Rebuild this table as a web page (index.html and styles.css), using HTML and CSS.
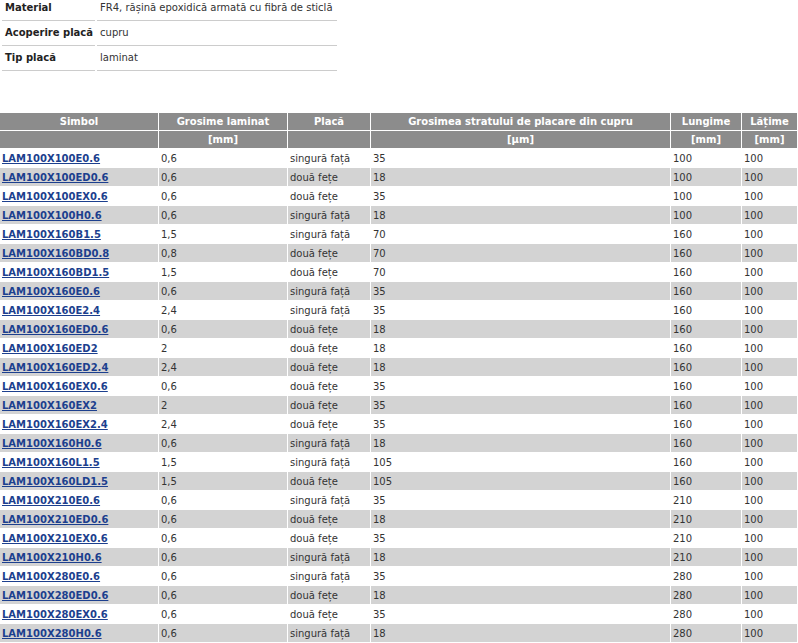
FILE: index.html
```html
<!DOCTYPE html>
<html lang="ro">
<head>
<meta charset="utf-8">
<title>Laminat</title>
<link rel="stylesheet" href="styles.css">
</head>
<body>
<table class="props">
  <tr><th>Material</th><td>FR4, rășină epoxidică armată cu fibră de sticlă</td></tr>
  <tr><th>Acoperire placă</th><td>cupru</td></tr>
  <tr><th>Tip placă</th><td>laminat</td></tr>
</table>

<table class="list">
  <colgroup>
    <col class="c-sym"><col class="c-gro"><col class="c-pla"><col class="c-str"><col class="c-len"><col class="c-lat">
  </colgroup>
  <thead>
    <tr><th>Simbol</th><th>Grosime laminat</th><th>Placă</th><th>Grosimea stratului de placare din cupru</th><th>Lungime</th><th>Lățime</th></tr>
    <tr><th></th><th>[mm]</th><th></th><th>[µm]</th><th>[mm]</th><th>[mm]</th></tr>
  </thead>
  <tbody>
    <tr><td><a href="#">LAM100X100E0.6</a></td><td>0,6</td><td>singură față</td><td>35</td><td>100</td><td>100</td></tr>
    <tr><td><a href="#">LAM100X100ED0.6</a></td><td>0,6</td><td>două fețe</td><td>18</td><td>100</td><td>100</td></tr>
    <tr><td><a href="#">LAM100X100EX0.6</a></td><td>0,6</td><td>două fețe</td><td>35</td><td>100</td><td>100</td></tr>
    <tr><td><a href="#">LAM100X100H0.6</a></td><td>0,6</td><td>singură față</td><td>18</td><td>100</td><td>100</td></tr>
    <tr><td><a href="#">LAM100X160B1.5</a></td><td>1,5</td><td>singură față</td><td>70</td><td>160</td><td>100</td></tr>
    <tr><td><a href="#">LAM100X160BD0.8</a></td><td>0,8</td><td>două fețe</td><td>70</td><td>160</td><td>100</td></tr>
    <tr><td><a href="#">LAM100X160BD1.5</a></td><td>1,5</td><td>două fețe</td><td>70</td><td>160</td><td>100</td></tr>
    <tr><td><a href="#">LAM100X160E0.6</a></td><td>0,6</td><td>singură față</td><td>35</td><td>160</td><td>100</td></tr>
    <tr><td><a href="#">LAM100X160E2.4</a></td><td>2,4</td><td>singură față</td><td>35</td><td>160</td><td>100</td></tr>
    <tr><td><a href="#">LAM100X160ED0.6</a></td><td>0,6</td><td>două fețe</td><td>18</td><td>160</td><td>100</td></tr>
    <tr><td><a href="#">LAM100X160ED2</a></td><td>2</td><td>două fețe</td><td>18</td><td>160</td><td>100</td></tr>
    <tr><td><a href="#">LAM100X160ED2.4</a></td><td>2,4</td><td>două fețe</td><td>18</td><td>160</td><td>100</td></tr>
    <tr><td><a href="#">LAM100X160EX0.6</a></td><td>0,6</td><td>două fețe</td><td>35</td><td>160</td><td>100</td></tr>
    <tr><td><a href="#">LAM100X160EX2</a></td><td>2</td><td>două fețe</td><td>35</td><td>160</td><td>100</td></tr>
    <tr><td><a href="#">LAM100X160EX2.4</a></td><td>2,4</td><td>două fețe</td><td>35</td><td>160</td><td>100</td></tr>
    <tr><td><a href="#">LAM100X160H0.6</a></td><td>0,6</td><td>singură față</td><td>18</td><td>160</td><td>100</td></tr>
    <tr><td><a href="#">LAM100X160L1.5</a></td><td>1,5</td><td>singură față</td><td>105</td><td>160</td><td>100</td></tr>
    <tr><td><a href="#">LAM100X160LD1.5</a></td><td>1,5</td><td>două fețe</td><td>105</td><td>160</td><td>100</td></tr>
    <tr><td><a href="#">LAM100X210E0.6</a></td><td>0,6</td><td>singură față</td><td>35</td><td>210</td><td>100</td></tr>
    <tr><td><a href="#">LAM100X210ED0.6</a></td><td>0,6</td><td>două fețe</td><td>18</td><td>210</td><td>100</td></tr>
    <tr><td><a href="#">LAM100X210EX0.6</a></td><td>0,6</td><td>două fețe</td><td>35</td><td>210</td><td>100</td></tr>
    <tr><td><a href="#">LAM100X210H0.6</a></td><td>0,6</td><td>singură față</td><td>18</td><td>210</td><td>100</td></tr>
    <tr><td><a href="#">LAM100X280E0.6</a></td><td>0,6</td><td>singură față</td><td>35</td><td>280</td><td>100</td></tr>
    <tr><td><a href="#">LAM100X280ED0.6</a></td><td>0,6</td><td>două fețe</td><td>18</td><td>280</td><td>100</td></tr>
    <tr><td><a href="#">LAM100X280EX0.6</a></td><td>0,6</td><td>două fețe</td><td>35</td><td>280</td><td>100</td></tr>
    <tr><td><a href="#">LAM100X280H0.6</a></td><td>0,6</td><td>singură față</td><td>18</td><td>280</td><td>100</td></tr>
  </tbody>
</table>
</body>
</html>
```

FILE: styles.css
```css
html, body {
  margin: 0;
  padding: 0;
  background: #fff;
}
body {
  font-family: "DejaVu Sans", Verdana, sans-serif;
  font-size: 10px;
  color: #333;
}
.props {
  border-collapse: separate;
  border-spacing: 2px 0;
  margin: 0 0 41px 0;
}
.props th, .props td {
  text-align: left;
  padding: 4px 3px 6px 3px;
  height: 14px;
  border-bottom: 1px solid #ccc;
  white-space: nowrap;
}
.props tr:first-child th, .props tr:first-child td {
  padding-top: 1px;
  height: 13px;
}
.props th {
  font-weight: bold;
  color: #222;
  padding-right: 2px;
}
.props td {
  padding-right: 4px;
}
.list {
  width: 798px;
  border-collapse: separate;
  border-spacing: 1px;
  margin: 0 0 0 -1px;
  table-layout: fixed;
}
.c-sym { width: 158px; }
.c-gro { width: 128px; }
.c-pla { width: 82px; }
.c-str { width: 299px; }
.c-len { width: 70px; }
.c-lat { width: 55px; }
.list th {
  background: #8c8c8c;
  color: #fff;
  font-weight: bold;
  text-align: center;
  height: 17px;
  padding: 0 2px;
  white-space: nowrap;
  overflow: hidden;
}
.list td {
  height: 18px;
  padding: 0 2px;
  white-space: nowrap;
  overflow: hidden;
}
.list tbody tr:nth-child(even) td {
  background: #d3d3d3;
}
.list a {
  color: #1c3f8e;
  font-weight: bold;
  text-decoration: underline;
}
```
